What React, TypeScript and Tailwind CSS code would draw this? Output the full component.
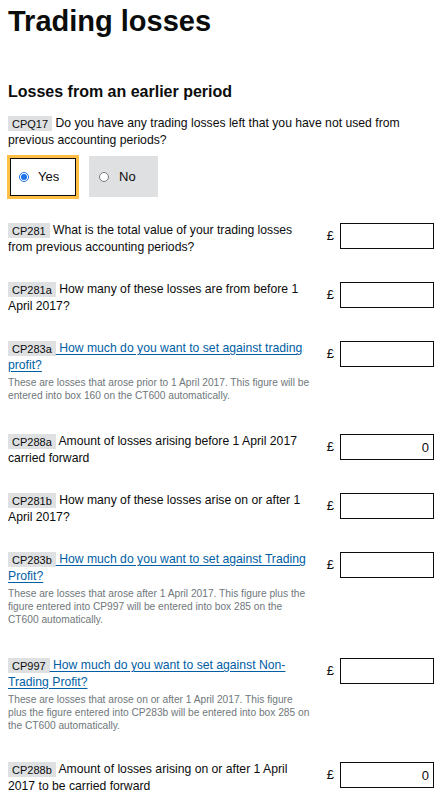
import React from 'react'

type Row = {
  code: string
  label: string
  link?: boolean
  hint?: string
  value?: string
  gap?: string
}

const rows: Row[] = [
  { code: 'CP281', label: 'What is the total value of your trading losses from previous accounting periods?' },
  { code: 'CP281a', label: 'How many of these losses are from before 1 April 2017?' },
  {
    code: 'CP283a',
    label: 'How much do you want to set against trading profit?',
    link: true,
    hint: 'These are losses that arose prior to 1 April 2017. This figure will be entered into box 160 on the CT600 automatically.',
    gap: 'mb-[31px]',
  },
  { code: 'CP288a', label: 'Amount of losses arising before 1 April 2017 carried forward', value: '0' },
  { code: 'CP281b', label: 'How many of these losses arise on or after 1 April 2017?' },
  {
    code: 'CP283b',
    label: 'How much do you want to set against Trading Profit?',
    link: true,
    hint: 'These are losses that arose after 1 April 2017. This figure plus the figure entered into CP997 will be entered into box 285 on the CT600 automatically.',
    gap: 'mb-[31px]',
  },
  {
    code: 'CP997',
    label: 'How much do you want to set against Non-Trading Profit?',
    link: true,
    hint: 'These are losses that arose on or after 1 April 2017. This figure plus the figure entered into CP283b will be entered into box 285 on the CT600 automatically.',
    gap: 'mb-[29px]',
  },
  { code: 'CP288b', label: 'Amount of losses arising on or after 1 April 2017 to be carried forward', value: '0' },
]

function Tag({ code }: { code: string }) {
  return <span className="bg-[#dee0e2] px-[4px] py-[1.5px] text-[11px] text-[#0b0c0c]">{code}</span>
}

function FieldRow({ row }: { row: Row }) {
  return (
    <div className={`flex items-start justify-between ${row.gap ?? 'mb-[25px]'}`}>
      <div className="w-[306px] shrink-0">
        <div className="text-[12.2px] leading-[17px] text-[#0b0c0c]">
          <Tag code={row.code} />
          {row.link ? (
            <a href="#" className="text-[#005ea5] underline underline-offset-2">{' ' + row.label}</a>
          ) : (
            <span>{' ' + row.label}</span>
          )}
        </div>
        {row.hint && (
          <p className="text-[10.2px] leading-[13px] text-[#6f777b] mt-[2px]">{row.hint}</p>
        )}
      </div>
      <div className="flex items-center pt-[1px]">
        <span className="text-[13px] text-[#0b0c0c] mr-[6px]">£</span>
        <input
          type="text"
          defaultValue={row.value ?? ''}
          className="w-[94px] h-[26px] border border-[#0b0c0c] text-right px-[4px] text-[13px] outline-none"
        />
      </div>
    </div>
  )
}

export default function App() {
  return (
    <div className="bg-white min-h-screen pl-[8px] pr-[14px] text-[#0b0c0c]" style={{ fontFamily: '"Liberation Sans", Arial, sans-serif' }}>
      <h1 className="text-[29px] font-bold leading-[36px] pt-[3px] mb-[43px]">Trading losses</h1>
      <h2 className="text-[16px] font-bold leading-[20px] mb-[13px]">Losses from an earlier period</h2>

      <div className="text-[12.2px] leading-[17px] mb-[6px]">
        <Tag code="CPQ17" /> Do you have any trading losses left that you have not used from previous accounting periods?
      </div>

      <div className="flex gap-[10px] mb-[23px] -ml-[1px]">
        <label className="flex items-center w-[72px] h-[44px] border-[3px] border-[#ffbf47] outline outline-1 outline-[#0b0c0c] -outline-offset-[4px] pl-[9px] text-[13px]">
          <input type="radio" name="cpq17" defaultChecked className="w-[10px] h-[10px] accent-[#1a73e8] mr-[9px]" />
          Yes
        </label>
        <label className="flex items-center w-[69px] h-[41px] mt-[1px] bg-[#dee0e2] pl-[10px] text-[13px]">
          <input type="radio" name="cpq17" className="w-[10px] h-[10px] mr-[10px]" />
          No
        </label>
      </div>

      {rows.map(r => (
        <FieldRow key={r.code} row={r} />
      ))}
    </div>
  )
}
